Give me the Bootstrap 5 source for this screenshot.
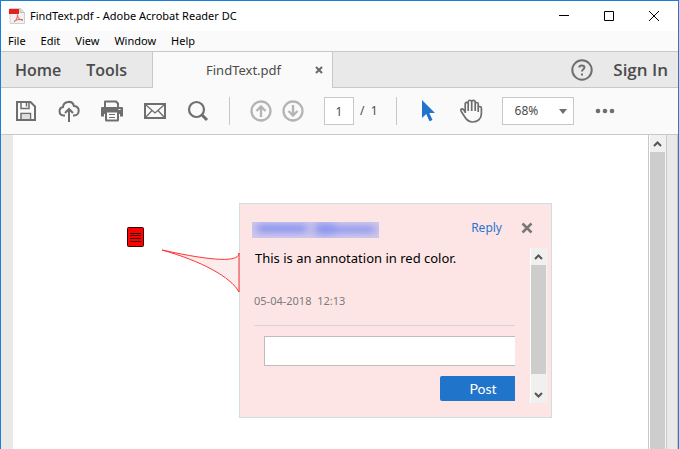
<!DOCTYPE html>
<html lang="en">
<head>
<meta charset="utf-8">
<meta name="viewport" content="width=device-width, initial-scale=1">
<title>FindText.pdf - Adobe Acrobat Reader DC</title>
<link href="https://cdn.jsdelivr.net/npm/bootstrap@5.3.0/dist/css/bootstrap.min.css" rel="stylesheet">
<style>
body{font-family:"Noto Sans","Open Sans",sans-serif;font-size:12px;line-height:16px;color:#000;background:#fff}
button{background:none;border:0;padding:0;color:inherit}
svg{display:block;flex:none}
.app-window{border:1px solid #1a7fd8;border-bottom:0;overflow:hidden}
.title-row{height:30px;padding:0 2px 0 8px}
.title-text{font-size:11px;margin-left:5px}
.win-btn{width:45px;height:30px}
.menu-row{height:20px;background:#fafafa;padding-left:7px;gap:15px;font-size:11px}
.menu-row button{line-height:20px}
.tab-row{height:37px;background:#e9e9e9;border-top:1px solid #c8c8c8}
.edge-b{border-bottom:1px solid #c8c8c8}
.main-tabs{width:152px;border-right:1px solid #c8c8c8;padding-left:14px;gap:25px}
.main-tabs a,.sign-in{font:600 16px/20px "Open Sans","Noto Sans",sans-serif;color:#4b4b4b;text-decoration:none}
.sign-in{font-size:17px}
.account{padding-right:10px;gap:20px}
.file-tab{width:180px;background:#fafafa;border-right:1px solid #c8c8c8;color:#4b4b4b;padding:0 9px 0 53px;font-size:13px}
.tool-row{height:47px;background:#fafafa;border-bottom:1px solid #c8c8c8;padding-left:14px;color:#6e6e6e}
.tool-set{gap:21px}
.page-set{gap:10px}
.divider-v{width:1px;height:28px;background:#c8c8c8;margin:0 20px}
.page-box{width:30px;height:28px;border:1px solid #c8c8c8;border-radius:0;text-align:center;color:#4b4b4b;background:#fff;padding:0;margin-left:20px}
.page-count{margin:0 -2px 0 6px;color:#4b4b4b}
.zoom-wrap{position:relative;width:72px;margin-left:19px}
.zoom-box{width:100%;height:28px;appearance:none;border:1px solid #c8c8c8;background:#fff;color:#4b4b4b;padding:0 0 0 12px;border-radius:0;font-size:12px}
.zoom-wrap svg{position:absolute;right:7px;top:12px;pointer-events:none}
.work{height:calc(100vh - 135px);background:#e9e9e9;padding-left:12px}
.sheet{position:relative;background:#fff;border-right:1px solid #c8c8c8}
.bar-v{width:17px;background:#f0f0f0;border-left:1px solid #fff;border-right:1px solid #f4f4f4}
.bar-v button{height:17px;width:100%;display:flex;align-items:center;justify-content:center}
.thumb{background:#cdcdcd}
.gutter{width:12px;border-left:1px solid #c8c8c8;border-right:1px solid #c8c8c8}
.note-pin{position:absolute;left:113px;top:91px}
.callout-tail{position:absolute;left:148px;top:114px}
.popup{position:absolute;left:226px;top:68px;width:313px;background:#fde5e5;border:1px solid #cfdfdf;padding:18px 4px 14px 12px}
.popup-head{height:16px;padding-right:14px}
.popup-head button{height:12px}
.reply{color:#2a74cf;text-decoration:none;font-size:12px;line-height:12px;margin-right:19px}
.popup-body{margin-top:10px;height:155px;gap:15px}
.note-text{font-size:13px;line-height:20px;margin:0 0 0 3px}
.stamp{font-size:11px;color:#7c7c7c;margin:25px 0 0 2px}
.rule{height:1px;background:#d5d5d5;margin:16px 0 10px 2px}
.answer{display:block;height:30px;width:calc(100% - 12px);margin-left:12px;border:1px solid #bdbdbd;border-right:0;background:#fff;padding:0 6px}
.post{display:block;width:75px;height:25px;background:#2074c9;color:#fff;border-radius:2px 0 0 2px;font:14px/25px Lato,sans-serif;margin:10px 0 0 auto;padding-left:11px}
</style>
<script src="https://cdn.jsdelivr.net/npm/bootstrap@5.3.0/dist/js/bootstrap.bundle.min.js"></script>
</head>
<body>
<div class="app-window">
  <header>
    <div class="title-row d-flex align-items-center">
      <svg width="16" height="16" viewBox="0 0 16 16" aria-hidden="true"><path d="M1 .5h10.500L15.500 4.500V15.500H1z" fill="#f1f1f1" stroke="#d0d0d0"/><path d="M11 .5v4h4.500" fill="#ddd" stroke="#bbb"/><path d="M0 1h10v5H0z" fill="#e2231a"/><path d="M5 14c2-1 3.500-4 3.500-7.500M8.500 7c0 3 2 5 5.500 5M5 13.500c2-2 5-2.500 9-1.500" fill="none" stroke="#d9605a"/></svg>
      <span class="title-text me-auto">FindText.pdf - Adobe Acrobat Reader DC</span>
      <button class="win-btn d-flex align-items-center justify-content-center" aria-label="Minimize"><svg width="10" height="10"><path d="M0 4.500h10" stroke="#000"/></svg></button>
      <button class="win-btn d-flex align-items-center justify-content-center" aria-label="Maximize"><svg width="10" height="10"><path d="M.5.5h9v9h-9z" fill="none" stroke="#000"/></svg></button>
      <button class="win-btn d-flex align-items-center justify-content-center" aria-label="Close"><svg width="10" height="10"><path d="M0 0l10 10M10 0L0 10" stroke="#000"/></svg></button>
    </div>
    <nav class="menu-row d-flex" aria-label="Menu">
      <button>File</button><button>Edit</button><button>View</button><button>Window</button><button>Help</button>
    </nav>
    <div class="tab-row d-flex">
      <nav class="main-tabs edge-b d-flex align-items-center"><a href="#">Home</a><a href="#">Tools</a></nav>
      <div class="file-tab d-flex align-items-center justify-content-between"><span>FindText.pdf</span>
        <button aria-label="Close tab"><svg width="8" height="8"><path d="M1 1l6 6M7 1L1 7" stroke="#6a6a6a" stroke-width="2"/></svg></button></div>
      <div class="account edge-b flex-grow-1 d-flex align-items-center justify-content-end">
        <button aria-label="Help"><svg width="22" height="22" viewBox="0 0 22 22" fill="none" stroke="#6e6e6e" stroke-width="2"><circle cx="11" cy="11" r="9.700"/><path d="M8.300 8.500C8.300 5.700 13.400 5.700 13.400 8.500c0 1.900-2.400 1.700-2.400 4M11 14.400v2"/></svg></button>
        <a href="#" class="sign-in">Sign In</a>
      </div>
    </div>
    <div class="tool-row d-flex align-items-center">
      <div class="tool-set d-flex">
        <button aria-label="Save"><svg width="22" height="22" viewBox="0 0 22 22" fill="none" stroke="#6e6e6e" stroke-width="2"><path d="M2 2h13.500L20 6.500V20H2z"/><path d="M6 2v6.500h8V2M6 20v-6.500h9.500V20" stroke-width="1.500"/><path d="M7 14.500h7.500V19H7z" fill="#dedede" stroke="none"/><path d="M11.500 3v3.500" stroke-width="1.500"/></svg></button>
        <button aria-label="Upload"><svg width="22" height="22" viewBox="0 0 22 22" fill="none" stroke="#6e6e6e" stroke-width="2"><path d="M7 15.500H5.500a4.300 4.300 0 0 1-.5-8.500C5.500 1 14.500-.2 16 6c6.500.5 6 9.500 0 9.500h-1"/><path d="M11 22V9.500M7 13l4-4 4 4"/></svg></button>
        <button aria-label="Print"><svg width="22" height="22" viewBox="0 0 22 22"><path d="M3 8V1.500q0-1 1-1h11.500l2.500 2.500v5z" fill="#6e6e6e"/><path d="M5 2.500h9.500L16 4v4H5z" fill="#fafafa"/><path d="M1 7h20q1 0 1 1v8.500h-3V14H3v2.500H0V8q0-1 1-1" fill="#6e6e6e"/><path d="M4 12h14v8q0 1.500-1.500 1.500h-11Q4 21.500 4 20z" fill="#6e6e6e"/><path d="M6 12.500h10v7H6z" fill="#fafafa"/><path d="M8 14.500h6M8 17.500h6" stroke="#6e6e6e"/><path d="M17.500 9h2v1h-2z" fill="#fff"/></svg></button>
        <button aria-label="Mail"><svg width="22" height="22" viewBox="0 0 22 22" fill="none" stroke="#6e6e6e"><path d="M1 4h20v14H1z" stroke-width="2"/><path d="M2 5l9 8 9-8M2 17l6-6.500M20 17l-6-6.500" stroke-width="1.300"/></svg></button>
        <button aria-label="Search"><svg width="22" height="22" viewBox="0 0 22 22" fill="none" stroke="#6e6e6e"><circle cx="9.500" cy="9.500" r="7.500" stroke-width="2.200"/><path d="M14.500 14.500l5.500 5.500" stroke-width="3"/></svg></button>
      </div>
      <div class="divider-v"></div>
      <div class="page-set d-flex">
        <button aria-label="Previous page"><svg width="22" height="22" viewBox="0 0 22 22" fill="none" stroke="#b4b4b4" stroke-width="2.300"><circle cx="11" cy="11" r="9.500"/><path d="M11 17V6.500M6.500 11L11 6.500 15.500 11"/></svg></button>
        <button aria-label="Next page"><svg width="22" height="22" viewBox="0 0 22 22" fill="none" stroke="#b4b4b4" stroke-width="2.300"><circle cx="11" cy="11" r="9.500"/><path d="M11 5v10.500M6.500 11l4.500 4.500 4.500-4.500"/></svg></button>
      </div>
      <input class="page-box" value="1" aria-label="Page"><span class="page-count">/&nbsp; 1</span>
      <div class="divider-v"></div>
      <button aria-label="Select" class="ms-1"><svg width="15" height="22" viewBox="0 0 15 22"><path d="M1 0v18l4.200-4 3.300 7.300 3-1.400L8.300 13H14z" fill="#2074c9"/></svg></button>
      <button aria-label="Pan" class="ms-4"><svg width="23" height="24" viewBox="0 0 23 24" fill="none" stroke="#6e6e6e" stroke-width="1.700" stroke-linejoin="round"><path d="M5.200 14V5.200c0-2.400 3-2.400 3 0V3.200c0-2.600 3.500-2.600 3.500 0V3c0-2.300 3.500-2.300 3.500 0v2c0-2 3-2 3 0v4c0-2 3.200-2 3.200 0v5.500c0 5-3.400 8.500-8.700 8.500-4.200 0-6-1.800-8.200-5.500L1.300 12.500c-1.500-2.500 1-3.400 2.500-1.500L5.200 13M8.200 5v7M11.700 3v9M15.200 4v8M18.200 8v5"/></svg></button>
      <div class="zoom-wrap"><select class="zoom-box" aria-label="Zoom"><option>68%</option></select><svg width="8" height="5"><path d="M0 0h8L4 5z" fill="#6e6e6e"/></svg></div>
      <button aria-label="More tools" class="ms-4"><svg width="16" height="6" overflow="visible" fill="#6e6e6e"><circle cx="0" cy="3" r="2.300"/><circle cx="7" cy="3" r="2.300"/><circle cx="14" cy="3" r="2.300"/></svg></button>
    </div>
  </header>
  <main class="work d-flex">
    <section class="sheet flex-grow-1">
      <svg class="note-pin" width="19" height="22" role="img" aria-label="Note"><rect x="1.500" y="1.500" width="16" height="19" rx="1" fill="#f00" stroke="#300"/><path d="M4 7.500h11M4 9.500h11M4 12.500h11M4 15.500h11" stroke="#300"/></svg>
      <article class="popup">
        <div class="popup-head d-flex align-items-start">
          <svg class="me-auto" width="127" height="16" aria-hidden="true"><defs><filter id="soft" x="-20%" y="-50%" width="140%" height="200%"><feGaussianBlur stdDeviation="4 3"/></filter></defs><path d="M0 0h127v16H0z" fill="#cfc8ea"/><g filter="url(#soft)" fill="#8f98f0"><path d="M5 2h50v9H5zM63 1h20v12H63zM83 4h40v7H83z"/></g></svg>
          <a href="#" class="reply">Reply</a>
          <button aria-label="Close note"><svg width="12" height="12"><path d="M1.500 1.500l9 9M10.500 1.500l-9 9" stroke="#777" stroke-width="2.500"/></svg></button>
        </div>
        <div class="popup-body d-flex">
          <div class="flex-grow-1">
            <p class="note-text">This is an annotation in red color.</p>
            <div class="stamp">05-04-2018&nbsp; 12:13</div>
            <div class="rule"></div>
            <input class="answer" aria-label="Reply text">
            <button class="post">Post</button>
          </div>
          <div class="bar-v d-flex flex-column">
            <button aria-label="Scroll up"><svg width="9" height="6"><path d="M1 5l3.500-3.500L8 5" fill="none" stroke="#555" stroke-width="2"/></svg></button>
            <div class="thumb flex-grow-1 mb-1"></div>
            <button aria-label="Scroll down" class="mt-2"><svg width="9" height="6"><path d="M1 1l3.500 3.500L8 1" fill="none" stroke="#555" stroke-width="2"/></svg></button>
          </div>
        </div>
      </article>
      <svg class="callout-tail" width="79" height="46"><path d="M78 4C78 12 60 14 1 1C40 12 70 28 78 43V4" fill="#fdecec" stroke="#f33"/></svg>
    </section>
    <div class="bar-v d-flex flex-column">
      <button aria-label="Scroll up"><svg width="9" height="6"><path d="M1 5l3.500-3.500L8 5" fill="none" stroke="#555" stroke-width="2"/></svg></button>
      <div class="thumb flex-grow-1"></div>
    </div>
    <div class="gutter"></div>
  </main>
</div>
</body>
</html>
